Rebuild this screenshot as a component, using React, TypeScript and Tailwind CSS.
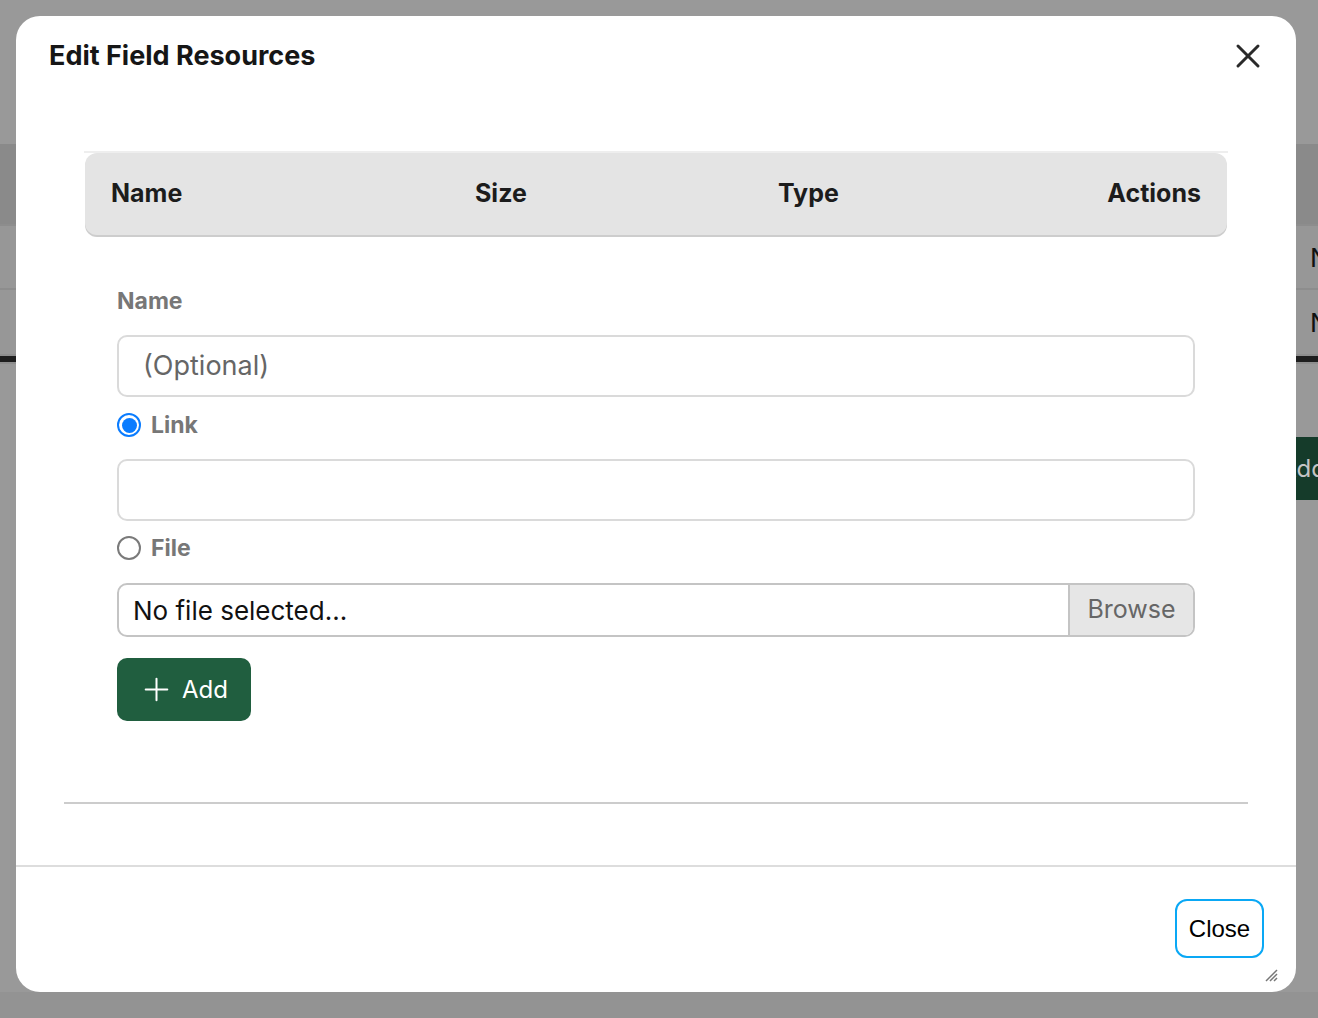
import { Plus, X } from "lucide-react";

const font = { fontFamily: "Inter, 'Noto Sans', sans-serif" };

function Radio({ checked, label }: { checked?: boolean; label: string }) {
  return (
    <label className="flex h-6 items-center gap-[10px]">
      {checked ? (
        <span className="flex h-6 w-6 items-center justify-center rounded-full border-2 border-[#0a7cff] bg-white">
          <span className="h-[15px] w-[15px] rounded-full bg-[#0a7cff]" />
        </span>
      ) : (
        <span className="h-6 w-6 rounded-full border-2 border-[#7a7a7a] bg-white" />
      )}
      <span className="text-[23px] font-bold leading-6 text-[#777]">{label}</span>
    </label>
  );
}

function Backdrop() {
  return (
    <div className="flex h-full flex-col">
      <div className="h-[144px]" />
      <div className="h-[80px] bg-[#8a8a8a]" />
      <div className="flex h-[66px] items-center justify-end border-t-2 border-b-2 border-[#8d8d8d] bg-[#979797]">
        <span className="w-[8px] overflow-hidden whitespace-nowrap text-[26px] text-[#111]">N</span>
      </div>
      <div className="flex h-[64px] items-center justify-end bg-[#979797]">
        <span className="w-[8px] overflow-hidden whitespace-nowrap text-[26px] text-[#111]">N</span>
      </div>
      <div className="h-[2px] bg-[#8e8e8e]" />
      <div className="h-[6px] bg-[#1e1e1e]" />
      <div className="h-[2px] bg-[#8e8e8e]" />
      <div className="h-[73px]" />
      <div className="flex justify-end">
        <div className="flex h-[63px] w-[118px] items-center whitespace-nowrap bg-[#153b2a] pl-[80px] text-[24px] text-[#c4c4c4]">
          Add Item
        </div>
      </div>
      <div className="flex-1" />
      <div className="h-[26px] bg-[#939393]" />
    </div>
  );
}

export default function App() {
  return (
    <div className="relative h-[1018px] w-full overflow-hidden bg-[#999999]" style={font}>
      <Backdrop />

      <div className="absolute left-4 top-4 flex h-[976px] w-[1280px] flex-col rounded-[24px] bg-white">
        <div className="flex h-[135px] items-start justify-between px-[33px] pt-[24px]">
          <h2 className="text-[27px] font-bold leading-[31px] text-[#161616]">Edit Field Resources</h2>
          <button className="-mr-[5px] -mt-[4px] text-[#2a2a2a]">
            <X size={40} strokeWidth={1.8} />
          </button>
        </div>

        <div className="px-[48px]">
          <div className="mx-[20px]">
            <div className="border-t-2 border-[#eeeeee]">
              <div className="mx-px grid h-[82px] grid-cols-[364px_303px_1fr_auto] items-center rounded-[12px] bg-[#e4e4e4] px-[26px] text-[25px] font-bold text-[#1c1c1c] shadow-[0_2px_0_#cdcdcd]">
                <span>Name</span>
                <span>Size</span>
                <span>Type</span>
                <span>Actions</span>
              </div>
            </div>

            <div className="px-[33px] pt-[54px]">
              <div className="h-6 text-[23px] font-bold leading-6 text-[#777]">Name</div>
              <div className="mt-[22px] flex h-[62px] items-center rounded-[10px] border-2 border-[#dadada] px-[24px] text-[27px] text-[#666]">
                (Optional)
              </div>
              <div className="mt-4">
                <Radio checked label="Link" />
              </div>
              <div className="mt-[22px] h-[62px] rounded-[10px] border-2 border-[#dadada]" />
              <div className="mt-[15px]">
                <Radio label="File" />
              </div>
              <div className="mt-[23px] flex h-[54px] overflow-hidden rounded-[10px] border-2 border-[#c4c4c4]">
                <div className="flex flex-1 items-center px-[14px] text-[26px] text-[#111]">No file selected...</div>
                <div className="flex w-[125px] items-center justify-center border-l-2 border-[#c4c4c4] bg-[#e6e6e6] text-[25px] text-[#666]">
                  Browse
                </div>
              </div>
              <button className="mt-[21px] flex h-[63px] w-[134px] items-center gap-[7px] rounded-[10px] bg-[#205e3f] pl-[21px] text-[24px] text-white">
                <Plus size={37} strokeWidth={1.3} />
                <span>Add</span>
              </button>
            </div>
          </div>

          <div className="mt-[81px] h-[2px] bg-[#cccccc]" />
        </div>

        <div className="mt-[61px] flex flex-1 items-start justify-end border-t-2 border-[#dddddd] pr-[32px] pt-[32px]">
          <button
            className="flex h-[59px] w-[89px] items-center justify-center rounded-[12px] border-2 border-[#0aa8f5] text-[24px] text-black"
            style={{ fontFamily: "'Liberation Sans', Arial, sans-serif" }}
          >
            Close
          </button>
        </div>

        <svg className="absolute bottom-[10px] right-[18px]" width="14" height="14" viewBox="0 0 14 14">
          <path d="M13 2 L2 13 M13 6 L6 13 M13 10 L10 13" stroke="#777" strokeWidth="1.5" />
        </svg>
      </div>
    </div>
  );
}
